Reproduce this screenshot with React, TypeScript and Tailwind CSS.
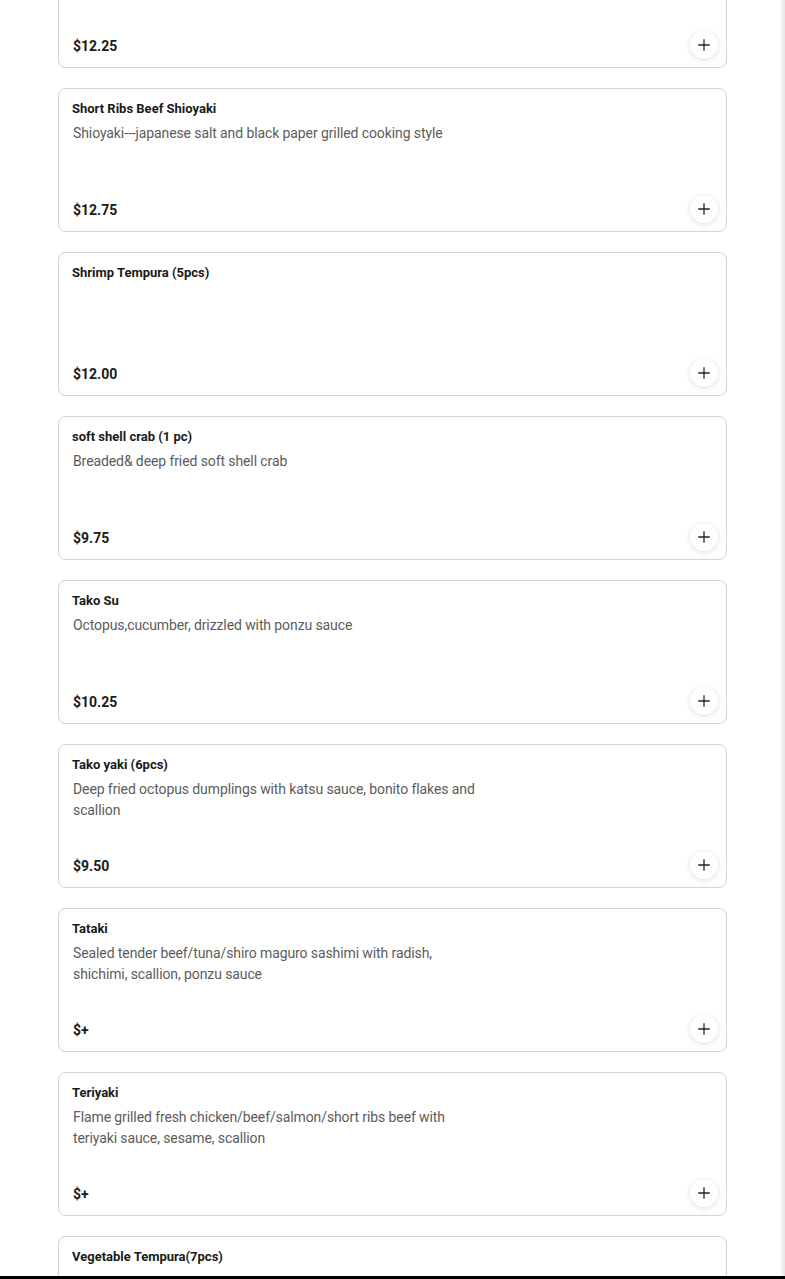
import React from 'react';
import { Plus } from 'lucide-react';

type Item = {
  name: string;
  description?: string;
  price: string;
};

const items: Item[] = [
  { name: '', price: '$12.25' },
  {
    name: 'Short Ribs Beef Shioyaki',
    description: 'Shioyaki---japanese salt and black paper grilled cooking style',
    price: '$12.75',
  },
  { name: 'Shrimp Tempura (5pcs)', price: '$12.00' },
  {
    name: 'soft shell crab (1 pc)',
    description: 'Breaded& deep fried soft shell crab',
    price: '$9.75',
  },
  {
    name: 'Tako Su',
    description: 'Octopus,cucumber, drizzled with ponzu sauce',
    price: '$10.25',
  },
  {
    name: 'Tako yaki (6pcs)',
    description: 'Deep fried octopus dumplings with katsu sauce, bonito flakes and scallion',
    price: '$9.50',
  },
  {
    name: 'Tataki',
    description: 'Sealed tender beef/tuna/shiro maguro sashimi with radish, shichimi, scallion, ponzu sauce',
    price: '$+',
  },
  {
    name: 'Teriyaki',
    description: 'Flame grilled fresh chicken/beef/salmon/short ribs beef with teriyaki sauce, sesame, scallion',
    price: '$+',
  },
  { name: 'Vegetable Tempura(7pcs)', price: '' },
];

const MenuCard: React.FC<{ item: Item }> = ({ item }) => (
  <div className="flex h-[144px] shrink-0 flex-col justify-between rounded-[8px] border border-[#d3d3d3] bg-white pt-[10px] pr-[8px] pb-[8px] pl-[13px]">
    <div>
      <p className="min-h-[20px] text-[13px] leading-[20px] font-bold text-[#1a1a1a]">{item.name}</p>
      {item.description && (
        <p className="mt-[4px] w-[416px] pl-px text-[14px] leading-[21px] tracking-[-0.1px] text-[#5c5c5c]">
          {item.description}
        </p>
      )}
    </div>
    <div className="flex items-center justify-between">
      <span className="pt-[2px] pl-px text-[14px] font-bold text-[#1a1a1a]">{item.price}</span>
      <button className="flex h-[28px] w-[28px] items-center justify-center rounded-full bg-white shadow-[0_1px_5px_rgba(0,0,0,0.14)]">
        <Plus size={18} strokeWidth={1.7} className="text-[#222]" />
      </button>
    </div>
  </div>
);

export default function App() {
  return (
    <div className="flex h-[1279px] flex-col overflow-hidden bg-white font-['Roboto',sans-serif]">
      <div className="flex min-h-0 flex-1">
        <div className="min-w-0 flex-1 overflow-hidden">
          <div className="-mt-[76px] ml-[58px] flex w-[669px] flex-col gap-[20px]">
            {items.map((item, i) => (
              <MenuCard key={i} item={item} />
            ))}
          </div>
        </div>
        <div className="w-[5px] bg-gradient-to-r from-white to-[#e6e6e6]" />
      </div>
      <div className="h-[3px] bg-black" />
    </div>
  );
}
